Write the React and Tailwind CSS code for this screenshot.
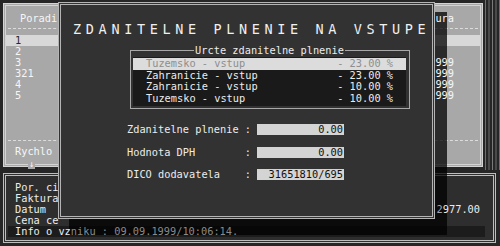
import React from "react";

const rowsLeft = ["1", "2", "3", "321", "4", "5"];
const rowsRight = ["", "", "09.09.1999", "09.09.1999", "09.09.1999", "09.09.1999"];

const listRows = [
  ["Tuzemsko - vstup", "- 23.00 %"],
  ["Zahranicie - vstup", "- 23.00 %"],
  ["Zahranicie - vstup", "- 10.00 %"],
  ["Tuzemsko - vstup", "- 10.00 %"],
];

const fields = [
  ["Zdanitelne plnenie :", "0.00"],
  ["Hodnota DPH        :", "0.00"],
  ["DICO dodavatela    :", "31651810/695"],
];

export default function App() {
  return (
    <div className="relative w-[500px] h-[246px] overflow-hidden bg-[#262626] font-['DejaVu_Sans_Mono',monospace] text-[10.3px] leading-[11px] text-[#ececec]">
      {/* top area */}
      <div className="flex h-[170px]">
        <div className="relative ml-[3px] mt-[3px] w-[480px] h-[164px] border-[3px] border-double border-[#d4d4d4] bg-[#a8a8a8] flex flex-col text-[#f6f6f6]">
          <div className="flex h-[18px] items-end pr-[26px]">
            <span className="pl-[14px]">Poradi</span>
            <span className="relative z-20 ml-auto">Faktura</span>
          </div>
          <div className="mx-[2px] mt-[4px] border-t border-dashed border-[#dcdcdc]" />
          <div className="mt-[6px] flex flex-col">
            {rowsLeft.map((r, i) => (
              <div
                key={i}
                className={`flex h-[11px] items-center pr-[26px] ${i === 0 ? "bg-[#d8d8d8] text-[#2a2a2a]" : ""}`}
              >
                <span className="pl-[9px]">{r}</span>
                <span className="relative z-20 ml-auto">{rowsRight[i]}</span>
              </div>
            ))}
          </div>
          <div className="mt-auto mx-[2px] border-t border-dashed border-[#dcdcdc]" />
          <div className="pl-[9px] mt-[5px] mb-[7px] h-[11px]">Rychlo</div>
          <div className="absolute left-[22px] bottom-[-5px] h-[9px] px-[1px] bg-[#a8a8a8] text-[9px] leading-[9px]">↓</div>
        </div>
        <div className="ml-[2px] flex gap-[2px] h-[170px]">
          <div className="w-[1px] bg-[#6e6e6e]" />
          <div className="w-[2px] bg-[#4a4a4a]" />
          <div className="w-[1px] bg-[#7a7a7a]" />
          <div className="w-[2px] bg-[#4a4a4a]" />
          <div className="w-[1px] bg-[#6e6e6e]" />
        </div>
      </div>

      {/* bottom panel */}
      <div className="ml-[3px] mt-[3px] w-[493px] h-[70px] border-[3px] border-double border-[#bdbdbd] bg-[#2e2e2e] flex flex-col pt-[6px]">
        {["Por. ci", "Faktura", "Datum", "Cena ce"].map((t, i) => (
          <div key={i} className="flex h-[11px] items-center pl-[9px] pr-[13px]">
            <span>{t}</span>
            {i === 2 && (
              <span className="relative z-20 ml-auto">
                <span className="text-[#a8a8a8]">2</span>977.00
              </span>
            )}
          </div>
        ))}
        <div className="mx-[2px] mr-[8px] h-[11px] bg-[#1c1c1c] flex items-center pl-[7px] whitespace-pre">
          <span className="relative z-20">
            Info o vz<span className="text-[#8a8a8a]">niku : 09.09.1999/10:06:14.</span>
          </span>
        </div>
      </div>

      {/* dialog shadow */}
      <div className="absolute z-10 left-[435px] top-[12px] w-[12px] h-[223px] bg-black/75" />
      <div className="absolute z-10 left-[69px] top-[219px] w-[366px] h-[16px] bg-black/75" />

      {/* dialog */}
      <div className="absolute z-30 left-[58px] top-[2px] w-[377px] h-[217px] border-[3px] border-double border-[#b4b4b4] bg-[#323232] flex flex-col">
        <div className="mt-[17px] pl-[4px] text-center whitespace-pre text-[13.5px] leading-[14px] tracking-[-1.75px] text-[#f0f0f0]">
          {"Z D A N I T E L N E   P L N E N I E   N A   V S T U P E"}
        </div>
        <fieldset className="ml-[69px] mt-[9px] w-[280px] border border-[#a8a8a8] pl-[2px] pr-[3px] pb-[2px]">
          <legend className="mx-auto px-[1px] leading-[11px]">Urcte zdanitelne plnenie</legend>
          <div className="mt-[1px] bg-[#1a1a1a] pt-[1px] pb-[2px]">
            {listRows.map(([a, b], i) => (
              <div
                key={i}
                className={`flex h-[11.5px] items-center px-[13px] whitespace-pre ${i === 0 ? "bg-[#dcdcdc] text-[#8e8e8e]" : ""}`}
              >
                <span>{a}</span>
                <span className="ml-auto">{b}</span>
              </div>
            ))}
          </div>
        </fieldset>
        <div className="ml-[66px] mt-[15px] flex flex-col gap-[11.5px]">
          {fields.map(([l, v], i) => (
            <div key={i} className="flex items-center h-[11px]">
              <span className="whitespace-pre">{l}</span>
              <span className="ml-[6px] w-[87px] h-[11px] bg-[#d4d4d4] text-[#111] text-right pr-[1px]">{v}</span>
            </div>
          ))}
        </div>
      </div>
    </div>
  );
}
